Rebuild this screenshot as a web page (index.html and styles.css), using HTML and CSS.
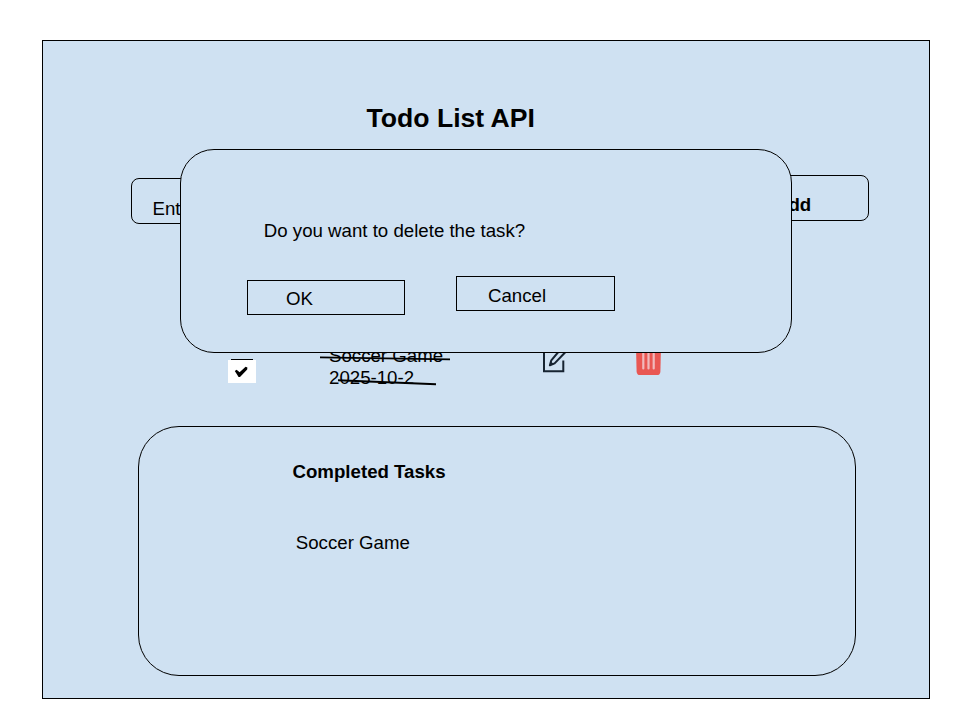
FILE: index.html
```html
<!DOCTYPE html>
<html lang="en">
<head>
<meta charset="utf-8">
<title>Todo List API</title>
<link rel="stylesheet" href="styles.css">
</head>
<body>
<main class="board">
  <h1 class="title">Todo List API</h1>
  <div class="entry">
    <div class="field">Enter</div>
    <div class="add">Add</div>
  </div>
  <div class="task">
    <svg class="check" width="28" height="25" viewBox="0 0 28 25">
      <path d="M0 2H28V25H0Z" fill="#fff"/>
      <path d="M3 1.5H25" stroke="#000"/>
      <path d="M6.8 13L8.6 11.8L11.6 14.2L17.6 8.8L19.4 9.6L19.2 11.6L12 19H10.6Z" fill="#000"/>
    </svg>
    <div class="task-text">
      <div>Soccer Game</div>
      <div>2025-10-2</div>
      <svg class="strikes" width="132" height="32" viewBox="0 0 132 32">
        <path d="M1 3.4L131 5.4M19 26.3L117 30.2" stroke="#000" stroke-width="1.9" fill="none"/>
      </svg>
    </div>
    <svg class="edit" width="24" height="27" viewBox="0 0 24 27">
      <path d="M9 5H2V25.3H21.3V14.5" fill="none" stroke="#162331" stroke-width="2"/>
      <path d="M7.9 19.3L9.3 14.3L18 4L23.5 6L12.6 17.4Z" fill="none" stroke="#162331" stroke-width="2" stroke-linejoin="round"/>
      <path d="M7.4 19.8L8.8 15.5L11.8 18Z" fill="#162331"/>
    </svg>
    <svg class="trash" width="27" height="32" viewBox="0 0 27 32">
      <path d="M1 3H26L25.4 28.4Q25.2 32 22 32H5Q1.8 32 1.6 28.4Z" fill="#e95753"/>
      <path d="M8.3 6V25.5M13.5 6V25.5M18.7 6V25.5" stroke="#f1b9bc" stroke-width="2.2" stroke-linecap="round"/>
    </svg>
  </div>
  <section class="completed">
    <h2>Completed Tasks</h2>
    <p>Soccer Game</p>
  </section>
  <div class="dialog" role="dialog">
    <p>Do you want to delete the task?</p>
    <div class="actions">
      <div class="ok">OK</div>
      <div class="cancel">Cancel</div>
    </div>
  </div>
</main>
</body>
</html>
```
FILE: styles.css
```css
* { box-sizing: border-box; }
body {
  margin: 0;
  padding: 40px 30px 0 42px;
  background: #fff;
  color: #000;
  font: 18.67px/22px "Liberation Sans", Arial, sans-serif;
}
h1, h2, p { margin: 0; }
.board {
  position: relative;
  height: 659px;
  padding-top: 62px;
  border: 1px solid #000;
  background: #cfe1f2;
}
.title {
  margin-left: 323.5px;
  font-size: 26.6px;
  line-height: 30px;
}
.entry {
  display: flex;
  justify-content: space-between;
  align-items: flex-start;
  height: 49px;
  margin: 42px 60px 0 88px;
}
.field, .add {
  height: 46px;
  border: 1px solid #000;
  border-radius: 8px;
}
.field {
  width: 500px;
  margin-top: 3px;
  padding: 19px 0 0 20.5px;
}
.add {
  width: 129px;
  padding: 18px 0 0 34px;
  font-weight: bold;
}
.task {
  display: flex;
  align-items: flex-start;
  height: 80px;
  margin: 120px 0 0 185px;
}
.task svg { display: block; }
.check { margin-top: 14px; }
.task-text {
  position: relative;
  width: 214px;
  margin-left: 73px;
  padding-top: 1px;
  line-height: 22.4px;
}
.strikes { position: absolute; left: -10px; top: 10px; }
.edit { margin-top: 1.5px; margin-left: -1px; }
.trash { margin: -1px 0 0 69px; }
.completed {
  width: 718px;
  height: 250px;
  margin: 2px 0 0 95px;
  padding: 34px 0 0 153.5px;
  border: 1px solid #000;
  border-radius: 41px;
}
.completed h2 { font-size: 18.67px; }
.completed p { margin: 49px 0 0 3.3px; }
.dialog {
  position: absolute;
  left: 137px;
  top: 108px;
  width: 612px;
  height: 204px;
  padding: 70px 0 0 66px;
  border: 1px solid #000;
  border-radius: 34px;
  background: #cfe1f2;
}
.dialog p { margin-left: 16.8px; }
.actions {
  display: flex;
  align-items: flex-start;
  gap: 51px;
  margin-top: 34px;
}
.ok, .cancel { height: 35px; border: 1px solid #000; }
.ok { width: 158px; margin-top: 4px; padding: 7px 0 0 38px; }
.cancel { width: 159px; padding: 8px 0 0 31px; }
```
